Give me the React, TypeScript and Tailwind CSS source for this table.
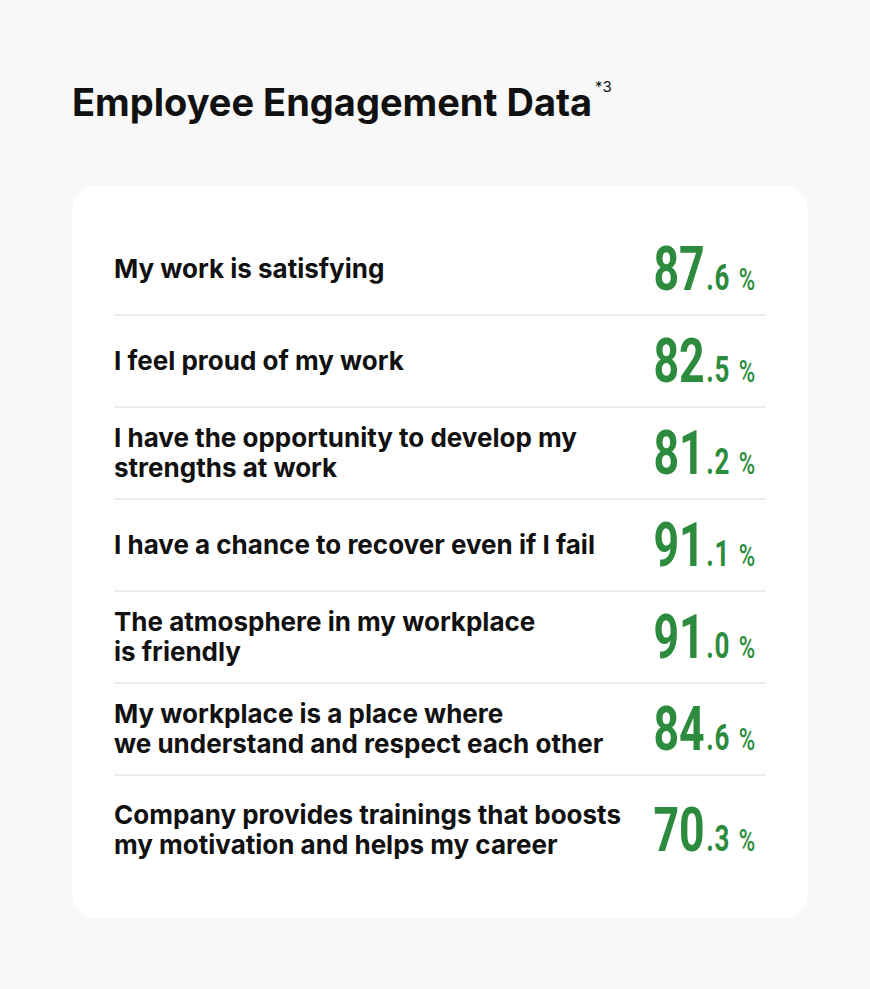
import React from "react";

type Item = {
  label: React.ReactNode;
  whole: string;
  dec: string;
};

const items: Item[] = [
  { label: "My work is satisfying", whole: "87", dec: ".6" },
  { label: "I feel proud of my work", whole: "82", dec: ".5" },
  {
    label: (
      <>
        I have the opportunity to develop my
        <br />
        strengths at work
      </>
    ),
    whole: "81",
    dec: ".2",
  },
  { label: "I have a chance to recover even if I fail", whole: "91", dec: ".1" },
  {
    label: (
      <>
        The atmosphere in my workplace
        <br />
        is friendly
      </>
    ),
    whole: "91",
    dec: ".0",
  },
  {
    label: (
      <>
        My workplace is a place where
        <br />
        we understand and respect each other
      </>
    ),
    whole: "84",
    dec: ".6",
  },
  {
    label: (
      <>
        Company provides trainings that boosts
        <br />
        my motivation and helps my career
      </>
    ),
    whole: "70",
    dec: ".3",
  },
];

// condensed look: no condensed face installed, so squeeze Roboto horizontally
function Percent({ whole, dec }: { whole: string; dec: string }) {
  return (
    <div className="mr-[11px] flex h-[60px] w-[110px] shrink-0 items-center justify-end">
      <span className="inline-flex origin-right scale-x-[0.72] items-baseline whitespace-nowrap font-['Roboto',sans-serif] leading-none text-[#2d8b3e]">
        <span className="text-[62px] font-bold">{whole}</span>
        <span className="ml-[2px] text-[36px] font-bold tracking-[1px]">{dec}</span>
        <span className="ml-[12px] text-[31px] font-medium">%</span>
      </span>
    </div>
  );
}

export default function App() {
  return (
    <div className="min-h-[989px] bg-[#f8f8f8] pl-[72px] pt-[80px] font-['Inter','Noto_Sans',sans-serif] text-[#111]">
      <h1 className="flex items-start text-[38px] font-bold leading-[44px]">
        <span>Employee Engagement Data</span>
        <sup className="ml-[3px] mt-[6px] text-[15px] font-normal leading-none">*3</sup>
      </h1>

      <div className="mt-[62px] w-[736px] rounded-3xl bg-white px-[42px] pb-[34px] pt-[38px]">
        {items.map((it, i) => {
          const last = i === items.length - 1;
          return (
            <div
              key={i}
              className={
                last
                  ? "flex items-center justify-between py-6"
                  : "flex items-center justify-between border-b-2 border-[#e9eee9] py-[15px]"
              }
            >
              <p className="flex h-[60px] items-center whitespace-nowrap text-[26px] font-bold leading-[30px]">
                <span>{it.label}</span>
              </p>
              <Percent whole={it.whole} dec={it.dec} />
            </div>
          );
        })}
      </div>
    </div>
  );
}
